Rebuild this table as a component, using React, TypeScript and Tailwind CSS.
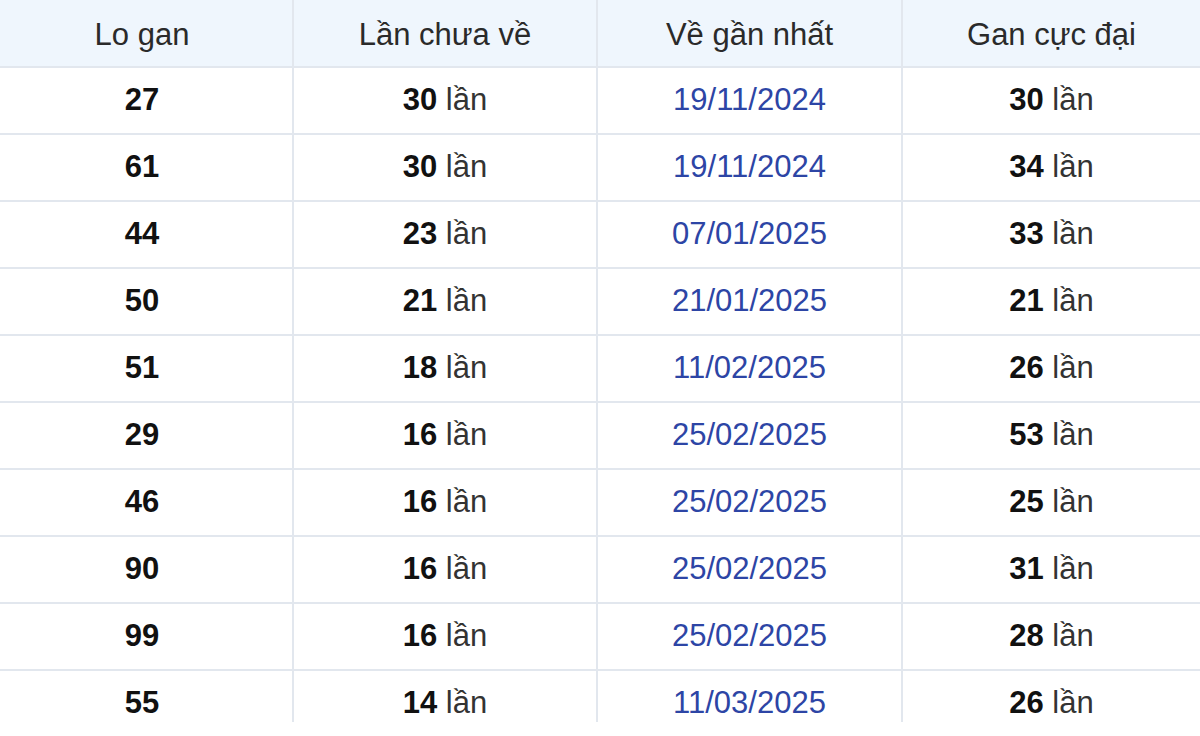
const rows: [string, number, string, number][] = [
  ['27', 30, '19/11/2024', 30],
  ['61', 30, '19/11/2024', 34],
  ['44', 23, '07/01/2025', 33],
  ['50', 21, '21/01/2025', 21],
  ['51', 18, '11/02/2025', 26],
  ['29', 16, '25/02/2025', 53],
  ['46', 16, '25/02/2025', 25],
  ['90', 16, '25/02/2025', 31],
  ['99', 16, '25/02/2025', 28],
  ['55', 14, '11/03/2025', 26],
];

const Count = ({ n }: { n: number }) => (
  <>
    <b className="font-bold text-[#111]">{n}</b> <span className="text-[#333]">lần</span>
  </>
);

export default function App() {
  return (
    <div className="h-[736px] w-[1200px] overflow-hidden bg-white font-['Liberation_Sans',Arial,sans-serif] text-[31px]">
      <div className="h-[722px] overflow-hidden">
        <table className="w-[1200px] table-fixed border-collapse">
          <colgroup>
            <col className="w-[293px]" />
            <col className="w-[304px]" />
            <col className="w-[305px]" />
            <col className="w-[298px]" />
          </colgroup>
          <thead>
            <tr className="h-[67px] bg-[#eff6fd] text-[#2a2a2a]">
              {['Lo gan', 'Lần chưa về', 'Về gần nhất', 'Gan cực đại'].map((h) => (
                <th
                  key={h}
                  className="border-2 border-t-0 border-[#e2e7ee] pt-1 text-center font-normal first:border-l-0 first:pr-2 last:border-r-0"
                >
                  {h}
                </th>
              ))}
            </tr>
          </thead>
          <tbody>
            {rows.map(([lo, miss, date, max]) => (
              <tr key={lo} className="h-[67px]">
                <td className="border-2 border-l-0 border-[#e2e7ee] pr-2 text-center font-bold text-[#111]">{lo}</td>
                <td className="border-2 border-[#e2e7ee] text-center">
                  <Count n={miss} />
                </td>
                <td className="border-2 border-[#e2e7ee] text-center text-[#2d45a5]">{date}</td>
                <td className="border-2 border-r-0 border-[#e2e7ee] text-center">
                  <Count n={max} />
                </td>
              </tr>
            ))}
          </tbody>
        </table>
      </div>
    </div>
  );
}
